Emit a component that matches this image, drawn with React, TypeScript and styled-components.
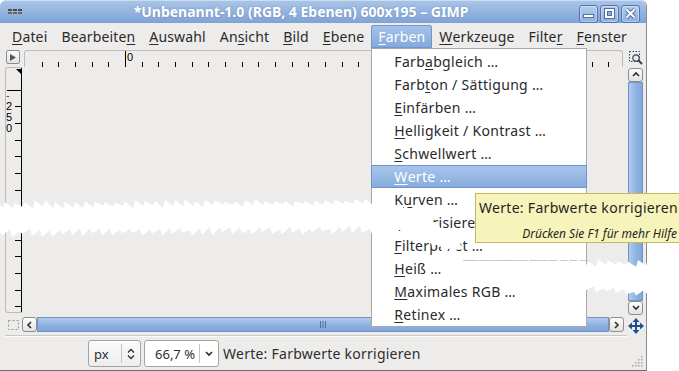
import React from "react";
import styled, { createGlobalStyle, css } from "styled-components";

const GlobalStyle = createGlobalStyle`
  html, body {
    margin: 0;
    padding: 0;
    background: #fff;
    overflow: hidden;
  }
  body {
    font-family: "Noto Sans", "DejaVu Sans", sans-serif;
    color: #2e2e2e;
  }
`;

const Page = styled.div`
  position: relative;
  width: 679px;
  height: 371px;
  overflow: hidden;
  background: #fff;
`;

const Window = styled.div`
  width: 647px;
  height: 371px;
  display: flex;
  flex-direction: column;
  background: #edeceb;
  border-right: 1px solid #8b8b8b;
  border-bottom: 1px solid #6e6e6e;
  border-radius: 6px 6px 0 0;
  box-sizing: border-box;
`;

const TitleBar = styled.div`
  height: 23px;
  flex: none;
  display: flex;
  align-items: center;
  padding: 0 6px 0 8px;
  border-radius: 6px 6px 0 0;
  background: linear-gradient(#abc5e8, #92b3df 55%, #7fa3d5);
  box-shadow: inset 0 1px 0 rgba(255, 255, 255, 0.4);
`;

const Title = styled.div`
  flex: 1;
  text-align: center;
  color: #fff;
  font-weight: bold;
  font-size: 14px;
  text-shadow: 0 0 2px rgba(40, 70, 120, 0.35);
  white-space: nowrap;
`;

const WinButtons = styled.div`
  display: flex;
  gap: 2px;
  margin-top: 4px;
`;

const WinButton = styled.div`
  width: 19px;
  height: 18px;
  box-sizing: border-box;
  border: 1px solid #5074ab;
  border-radius: 3px;
  background: linear-gradient(#b4cdee, #8eb0de);
  box-shadow: inset 0 0 0 1px rgba(255, 255, 255, 0.35);
  display: flex;
  align-items: center;
  justify-content: center;
`;

const MenuBar = styled.div`
  height: 25px;
  flex: none;
  display: flex;
  padding-left: 5px;
`;

const MenuSlot = styled.div<{ $active?: boolean }>`
  position: relative;
  display: flex;
  align-items: center;
  padding: 0 7px;
  margin-top: 2px;
  font-size: 14px;
  letter-spacing: 0.15px;
  color: #2a2a2a;
  white-space: nowrap;
  ${(p) =>
    p.$active &&
    css`
      color: #fff;
      border-radius: 3px 3px 0 0;
      background: linear-gradient(#a6c3ea, #84a8da);
      box-shadow: inset 0 0 0 1px #7097cb;
    `}
`;

const U = styled.span`
  text-decoration: underline;
  text-underline-offset: 2px;
`;

const Dropdown = styled.div`
  position: absolute;
  left: 0;
  top: 100%;
  width: 216px;
  box-sizing: border-box;
  background: #fff;
  border: 1px solid #a9a8a6;
  padding: 1px 0 0;
  z-index: 5;
  color: #2a2a2a;
`;

const DropItem = styled.div<{ $active?: boolean }>`
  height: 23px;
  display: flex;
  align-items: center;
  padding-left: 22px;
  font-size: 14px;
  letter-spacing: 0.3px;
  white-space: nowrap;
  ${(p) =>
    p.$active &&
    css`
      color: #fff;
      margin: 0 -1px;
      padding-left: 23px;
      background: linear-gradient(#a9c6ec, #87abdc);
      box-shadow: inset 0 0 0 1px #6f95c8;
    `}
`;

const Workspace = styled.div`
  flex: 1;
  display: grid;
  grid-template-columns: 22px 602px 22px;
  grid-template-rows: 19px 248px 19px;
`;

const Cell = styled.div<{ $pad?: string }>`
  display: flex;
  align-items: flex-start;
  padding: ${(p) => p.$pad || "0"};
`;

const CornerButton = styled.div`
  width: 14px;
  height: 14px;
  box-sizing: border-box;
  border: 1px solid #8c8c8c;
  border-radius: 2px;
  background: linear-gradient(#fbfbfb, #e2e2e2);
  display: flex;
  align-items: center;
  justify-content: center;
`;

const TopRuler = styled.div`
  width: 599px;
  height: 17px;
  box-sizing: border-box;
  border: 1px solid #bdbcba;
  border-bottom: none;
  border-radius: 3px 3px 0 0;
  overflow: hidden;
`;

const LeftRuler = styled.div`
  width: 17px;
  height: 246px;
  box-sizing: border-box;
  border: 1px solid #bdbcba;
  border-right: none;
  border-radius: 3px 0 0 3px;
  overflow: hidden;
`;

const Canvas = styled.div`
  background: #edeceb;
`;

const VScroll = styled.div`
  width: 15px;
  height: 247px;
  display: flex;
  flex-direction: column;
`;

const HScroll = styled.div`
  width: 603px;
  height: 15px;
  display: flex;
`;

const ScrollBtn = styled.div<{ $vertical?: boolean }>`
  flex: none;
  width: 15px;
  height: ${(p) => (p.$vertical ? "14px" : "15px")};
  box-sizing: border-box;
  border: 1px solid #8f8e8c;
  border-radius: 3px;
  background: linear-gradient(#fdfdfd, #e3e2e0);
  display: flex;
  align-items: center;
  justify-content: center;
`;

const Thumb = styled.div<{ $vertical?: boolean }>`
  flex: 1;
  box-sizing: border-box;
  border: 1px solid #7094c8;
  background: ${(p) =>
    p.$vertical
      ? "linear-gradient(90deg, #b0cbee, #8cafe0 60%, #82a7da)"
      : "linear-gradient(#b0cbee, #8cafe0 60%, #82a7da)"};
  display: flex;
  align-items: center;
  justify-content: center;
`;

const Rule = styled.div`
  flex: none;
  height: 1px;
  margin: 1px 19px 0 5px;
  background: #c9c8c6;
  border-bottom: 1px solid #fbfbfa;
`;

const StatusBar = styled.div`
  flex: 1;
  display: flex;
  align-items: center;
  padding-left: 88px;
  position: relative;
`;

const Combo = styled.div<{ $w: number; $white?: boolean }>`
  width: ${(p) => p.$w}px;
  height: 27px;
  box-sizing: border-box;
  border: 1px solid #a5a4a2;
  border-radius: 3px;
  background: ${(p) => (p.$white ? "#fff" : "linear-gradient(#fbfbfb, #ededed)")};
  display: flex;
  align-items: center;
  margin-right: 3px;
  font-size: 13px;
  color: #2e2e2e;
`;

const ComboText = styled.div<{ $right?: boolean }>`
  flex: 1;
  text-align: ${(p) => (p.$right ? "right" : "left")};
  padding: ${(p) => (p.$right ? "0 4px 0 0" : "0 0 0 5px")};
`;

const ComboSep = styled.div`
  width: 1px;
  height: 19px;
  background: #c6c5c3;
`;

const ComboArrow = styled.div`
  width: 18px;
  display: flex;
  justify-content: center;
`;

const StatusText = styled.div`
  font-size: 14px;
  letter-spacing: 0.25px;
  margin-left: 1px;
  white-space: nowrap;
`;

const Grip = styled.svg`
  position: absolute;
  right: 3px;
  bottom: 3px;
`;

const Tooltip = styled.div`
  position: absolute;
  left: 475px;
  top: 193px;
  width: 208px;
  height: 50px;
  box-sizing: border-box;
  background: #f6f4bb;
  border: 1px solid #c4ba5c;
  padding: 4px 0 0 3px;
  z-index: 6;
  color: #1f1f1f;
`;

const TipMain = styled.div`
  font-size: 14px;
  letter-spacing: 0.3px;
  white-space: nowrap;
`;

const TipHint = styled.div`
  font-size: 12px;
  font-style: italic;
  text-align: right;
  padding-right: 5px;
  margin-top: 8px;
  white-space: nowrap;
`;

const TearLayer = styled.svg`
  position: absolute;
  left: 0;
  top: 0;
  z-index: 10;
  pointer-events: none;
`;

/* ---------- drawings ---------- */

function WindowIcon() {
  return (
    <svg width="15" height="6" viewBox="0 0 15 6">
      {[0, 5, 10].map((x) => (
        <g key={x} fill="#4e4a44">
          <rect x={x} y={0} width="4" height="2" />
          <rect x={x} y={3} width="4" height="2" fill="#6b665d" />
        </g>
      ))}
    </svg>
  );
}

function TopRulerDrawing() {
  const origin = 100;
  const step = 250 / 15;
  const ticks: number[] = [];
  for (let k = -6; k <= 30; k++) {
    const x = origin + k * step;
    if (x > 0 && x < 598) ticks.push(k);
  }
  return (
    <svg width="597" height="17" style={{ display: "block" }}>
      <line x1="0" y1="16.5" x2="597" y2="16.5" stroke="#000" />
      {ticks.map((k) => {
        const x = Math.round(origin + k * step) + 0.5;
        const major = k % 15 === 0;
        return <line key={k} x1={x} x2={x} y1={major ? 0 : 11} y2={16} stroke="#000" />;
      })}
      <text x={origin + 2} y={10} fontSize="11" fontFamily="Liberation Sans, sans-serif">0</text>
      <text x={origin + 15 * step + 2} y={10} fontSize="11" fontFamily="Liberation Sans, sans-serif">250</text>
    </svg>
  );
}

function LeftRulerDrawing() {
  const origin = 21.5;
  const step = 250 / 15;
  const ticks: number[] = [];
  for (let k = 0; k < 15; k++) ticks.push(k);
  return (
    <svg width="16" height="244" style={{ display: "block" }}>
      <line x1="15.5" y1="0" x2="15.5" y2="244" stroke="#000" />
      <polygon points="10,1 15,1 15,6" fill="#000" />
      {ticks.map((k) => {
        const y = Math.round(origin + k * step) + 0.5;
        return <line key={k} x1={k === 0 ? 1 : 9} x2={15} y1={y} y2={y} stroke="#000" />;
      })}
      <g fontSize="11" fontFamily="Liberation Sans, sans-serif">
        <text x="0" y="31" fill="#7a4a10">-</text>
        <text x="0" y="42">2</text>
        <text x="0" y="53">5</text>
        <text x="0" y="64">0</text>
      </g>
    </svg>
  );
}

function Chevron({ dir }: { dir: "up" | "down" | "left" | "right" }) {
  const paths = {
    up: "M1 5 L4 2 L7 5",
    down: "M1 2 L4 5 L7 2",
    left: "M5 1 L2 4 L5 7",
    right: "M2 1 L5 4 L2 7",
  };
  return (
    <svg width="8" height="8" viewBox="0 0 8 8">
      <path d={paths[dir]} fill="none" stroke="#2e2e2e" strokeWidth="1.6" />
    </svg>
  );
}

function NavigateIcon() {
  return (
    <svg width="16" height="16" viewBox="0 0 16 16">
      <g fill="#1f4f96">
        <rect x="7" y="3" width="2" height="10" />
        <rect x="3" y="7" width="10" height="2" />
        <polygon points="8,0 11.5,4 4.5,4" />
        <polygon points="8,16 11.5,12 4.5,12" />
        <polygon points="0,8 4,4.5 4,11.5" />
        <polygon points="16,8 12,4.5 12,11.5" />
      </g>
    </svg>
  );
}

/* ---------- tear ---------- */

function rand(n: number) {
  const s = Math.sin(n * 12.9898) * 43758.5453;
  return s - Math.floor(s);
}

function along(knots: [number, number][], x: number) {
  for (let i = 0; i < knots.length - 1; i++) {
    const [x0, y0] = knots[i];
    const [x1, y1] = knots[i + 1];
    if (x <= x1) return y0 + ((y1 - y0) * (x - x0)) / (x1 - x0);
  }
  return knots[knots.length - 1][1];
}

function tear(top: [number, number][], bottom: [number, number][], x0: number, x1: number, seed: number) {
  const pts: string[] = [];
  let i = 0;
  for (let x = x0; x <= x1; x += 5, i++) {
    const up = i % 2 === 0;
    pts.push(`${x + (up ? 0 : 3)},${(along(top, x) + (up ? -1 : 1) * (1 + rand(i + seed) * 3.5)).toFixed(1)}`);
  }
  for (let x = x1; x >= x0; x -= 5, i++) {
    const up = i % 2 === 0;
    pts.push(`${x - (up ? 0 : 3)},${(along(bottom, x) + (up ? -1 : 1) * (1 + rand(i + seed) * 3.5)).toFixed(1)}`);
  }
  return pts.join(" ");
}

const tearLeft = tear(
  [[-5, 205], [360, 202], [420, 210], [445, 232], [460, 244]],
  [[-5, 233], [360, 230], [420, 236], [445, 251], [460, 250]],
  -5,
  460,
  3
);

const tearRight = tear(
  [[458, 266], [475, 263], [684, 263]],
  [[458, 270], [490, 285], [600, 289], [640, 294], [684, 280]],
  458,
  684,
  17
);

/* ---------- data ---------- */

const menus: { label: React.ReactNode; active?: boolean }[] = [
  { label: <><U>D</U>atei</> },
  { label: <>Bearbeite<U>n</U></> },
  { label: <><U>A</U>uswahl</> },
  { label: <>An<U>s</U>icht</> },
  { label: <><U>B</U>ild</> },
  { label: <><U>E</U>bene</> },
  { label: <><U>F</U>arben</>, active: true },
  { label: <><U>W</U>erkzeuge</> },
  { label: <>Filte<U>r</U></> },
  { label: <><U>F</U>enster</> },
];

const colorItems: { label: React.ReactNode; active?: boolean }[] = [
  { label: <>Farb<U>a</U>bgleich …</> },
  { label: <>Farb<U>t</U>on / Sättigung …</> },
  { label: <><U>E</U>infärben …</> },
  { label: <><U>H</U>elligkeit / Kontrast …</> },
  { label: <><U>S</U>chwellwert …</> },
  { label: <><U>W</U>erte …</>, active: true },
  { label: <>K<U>u</U>rven …</> },
  { label: <><U>P</U>osterisieren …</> },
  { label: <><U>F</U>ilterpaket …</> },
  { label: <><U>H</U>eiß …</> },
  { label: <><U>M</U>aximales RGB …</> },
  { label: <><U>R</U>etinex …</> },
];

export default function App() {
  return (
    <>
      <GlobalStyle />
      <Page>
        <Window>
          <TitleBar>
            <WindowIcon />
            <Title>*Unbenannt-1.0 (RGB, 4 Ebenen) 600x195 – GIMP</Title>
            <WinButtons>
              <WinButton>
                <svg width="11" height="11" viewBox="0 0 11 11">
                  <rect x="0.5" y="6.5" width="10" height="3" fill="#fff" stroke="#4d70a8" />
                </svg>
              </WinButton>
              <WinButton>
                <svg width="11" height="11" viewBox="0 0 11 11">
                  <rect x="0.5" y="0.5" width="10" height="10" fill="#fff" stroke="#4d70a8" />
                  <rect x="3.5" y="3.5" width="4" height="4" fill="#8eb0de" stroke="#4d70a8" />
                </svg>
              </WinButton>
              <WinButton>
                <svg width="11" height="11" viewBox="0 0 11 11">
                  <path d="M1.5 1.5 L9.5 9.5 M9.5 1.5 L1.5 9.5" stroke="#4d70a8" strokeWidth="4" />
                  <path d="M1.5 1.5 L9.5 9.5 M9.5 1.5 L1.5 9.5" stroke="#fff" strokeWidth="2" />
                </svg>
              </WinButton>
            </WinButtons>
          </TitleBar>

          <MenuBar>
            {menus.map((m, i) => (
              <MenuSlot key={i} $active={m.active}>
                {m.label}
                {m.active && (
                  <Dropdown>
                    {colorItems.map((c, j) => (
                      <DropItem key={j} $active={c.active}>
                        {c.label}
                      </DropItem>
                    ))}
                  </Dropdown>
                )}
              </MenuSlot>
            ))}
          </MenuBar>

          <Workspace>
            <Cell $pad="2px 0 0 6px">
              <CornerButton>
                <svg width="6" height="7" viewBox="0 0 6 7">
                  <polygon points="0,0 6,3.5 0,7" fill="#555" />
                </svg>
              </CornerButton>
            </Cell>
            <Cell $pad="2px 0 0 2px">
              <TopRuler>
                <TopRulerDrawing />
              </TopRuler>
            </Cell>
            <Cell $pad="3px 0 0 5px">
              <svg width="14" height="14" viewBox="0 0 14 14">
                <rect x="0.5" y="0.5" width="10" height="10" fill="none" stroke="#1f3f8a" strokeDasharray="1.5 1.5" />
                <circle cx="7" cy="7" r="3.2" fill="#e8eef8" stroke="#444" strokeWidth="1.2" />
                <path d="M9.3 9.3 L13 13" stroke="#444" strokeWidth="2" />
              </svg>
            </Cell>

            <Cell $pad="0 0 0 5px">
              <LeftRuler>
                <LeftRulerDrawing />
              </LeftRuler>
            </Cell>
            <Canvas />
            <Cell $pad="1px 0 0 4px">
              <VScroll>
                <ScrollBtn $vertical>
                  <Chevron dir="up" />
                </ScrollBtn>
                <Thumb $vertical />
                <ScrollBtn $vertical>
                  <Chevron dir="down" />
                </ScrollBtn>
              </VScroll>
            </Cell>

            <Cell $pad="5px 0 0 8px">
              <svg width="11" height="10" viewBox="0 0 11 10">
                <rect x="0.5" y="0.5" width="10" height="9" fill="none" stroke="#9a9a9a" strokeDasharray="2 2" />
              </svg>
            </Cell>
            <Cell $pad="2px 0 0 0">
              <HScroll>
                <ScrollBtn>
                  <Chevron dir="left" />
                </ScrollBtn>
                <Thumb>
                  <svg width="8" height="7" viewBox="0 0 8 7">
                    <path d="M1.5 0 V7 M4 0 V7 M6.5 0 V7" stroke="#4f6f9f" strokeWidth="1" />
                  </svg>
                </Thumb>
                <ScrollBtn>
                  <Chevron dir="right" />
                </ScrollBtn>
              </HScroll>
            </Cell>
            <Cell $pad="3px 0 0 4px">
              <NavigateIcon />
            </Cell>
          </Workspace>

          <Rule />

          <StatusBar>
            <Combo $w={53}>
              <ComboText>px</ComboText>
              <ComboSep />
              <ComboArrow>
                <svg width="8" height="12" viewBox="0 0 8 12">
                  <path d="M1 4.5 L4 1.5 L7 4.5 M1 7.5 L4 10.5 L7 7.5" fill="none" stroke="#2e2e2e" strokeWidth="1.3" />
                </svg>
              </ComboArrow>
            </Combo>
            <Combo $w={75} $white>
              <ComboText $right>66,7 %</ComboText>
              <ComboSep />
              <ComboArrow>
                <Chevron dir="down" />
              </ComboArrow>
            </Combo>
            <StatusText>Werte: Farbwerte korrigieren</StatusText>
            <Grip width="11" height="11" viewBox="0 0 11 11">
              {[
                [9, 1], [9, 4], [6, 4], [9, 7], [6, 7], [3, 7], [9, 10], [6, 10], [3, 10], [0, 10],
              ].map(([x, y], i) => (
                <rect key={i} x={x} y={y - 1} width="1.5" height="1.5" fill="#a8a7a4" />
              ))}
            </Grip>
          </StatusBar>
        </Window>

        <Tooltip>
          <TipMain>Werte: Farbwerte korrigieren</TipMain>
          <TipHint>Drücken Sie F1 für mehr Hilfe</TipHint>
        </Tooltip>

        <TearLayer width="679" height="371">
          <line x1="463" y1="260.5" x2="588" y2="260.5" stroke="#c8c7c5" />
          <polygon points={tearLeft} fill="#fff" />
          <polygon points={tearRight} fill="#fff" />
        </TearLayer>
      </Page>
    </>
  );
}
